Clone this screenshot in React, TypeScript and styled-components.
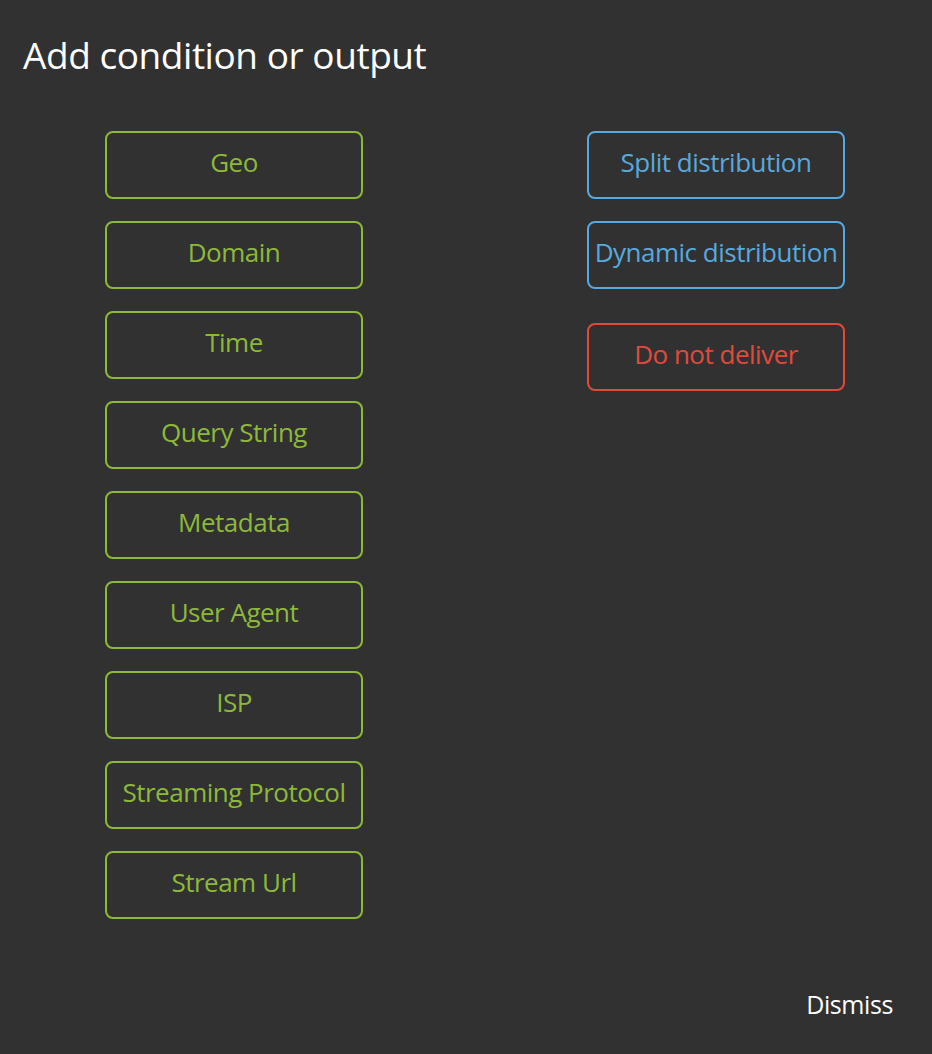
import styled, { createGlobalStyle } from 'styled-components';

const GlobalStyle = createGlobalStyle`
    html, body {
        margin: 0;
        padding: 0;
        background: #313131;
    }
    body {
        font-family: "Open Sans", "Noto Sans", sans-serif;
    }
`;

const Page = styled.div`
    box-sizing: border-box;
    min-height: 1054px;
    padding: 33px 39px 0 23px;
    display: flex;
    flex-direction: column;
`;

const Title = styled.h1`
    margin: 0;
    color: #ffffff;
    font-size: 37px;
    font-weight: 500;
    line-height: 44px;
    letter-spacing: -0.45px;
`;

const Columns = styled.div`
    display: grid;
    grid-template-columns: 258px 258px;
    column-gap: 224px;
    padding-left: 82px;
    margin-top: 54px;
    align-items: start;
`;

const Column = styled.div`
    display: flex;
    flex-direction: column;
    gap: 22px;
`;

type Tone = 'green' | 'blue' | 'red';

const tones: Record<Tone, string> = {
    green: '#8cba38',
    blue: '#57a9de',
    red: '#e14a3b',
};

const Option = styled.button<{ $tone: Tone; $gapBefore?: number }>`
    box-sizing: border-box;
    height: 68px;
    width: 100%;
    margin-top: ${({ $gapBefore }) => ($gapBefore ? `${$gapBefore}px` : '0')};
    border: 2px solid ${({ $tone }) => tones[$tone]};
    border-radius: 8px;
    background: transparent;
    color: ${({ $tone }) => tones[$tone]};
    font-family: "Open Sans", "Noto Sans", sans-serif;
    font-size: 26px;
    font-weight: 500;
    letter-spacing: -0.5px;
    padding: 0 0 6px;
    white-space: nowrap;
    cursor: pointer;
`;

const Footer = styled.div`
    margin-top: auto;
    display: flex;
    justify-content: flex-end;
    padding-bottom: 33px;
`;

const Dismiss = styled.button`
    border: none;
    background: transparent;
    color: #ffffff;
    font-family: "Open Sans", "Noto Sans", sans-serif;
    font-size: 25px;
    font-weight: 500;
    letter-spacing: -0.4px;
    padding: 0;
    cursor: pointer;
`;

const conditions = [
    'Geo',
    'Domain',
    'Time',
    'Query String',
    'Metadata',
    'User Agent',
    'ISP',
    'Streaming Protocol',
    'Stream Url',
];

const App = () => {
    return (
        <>
            <GlobalStyle />
            <Page>
                <Title>Add condition or output</Title>
                <Columns>
                    <Column>
                        {conditions.map((name) => (
                            <Option key={name} $tone="green">
                                {name}
                            </Option>
                        ))}
                    </Column>
                    <Column>
                        <Option $tone="blue">Split distribution</Option>
                        <Option $tone="blue">Dynamic distribution</Option>
                        <Option $tone="red" $gapBefore={12}>
                            Do not deliver
                        </Option>
                    </Column>
                </Columns>
                <Footer>
                    <Dismiss>Dismiss</Dismiss>
                </Footer>
            </Page>
        </>
    );
};

export default App;
